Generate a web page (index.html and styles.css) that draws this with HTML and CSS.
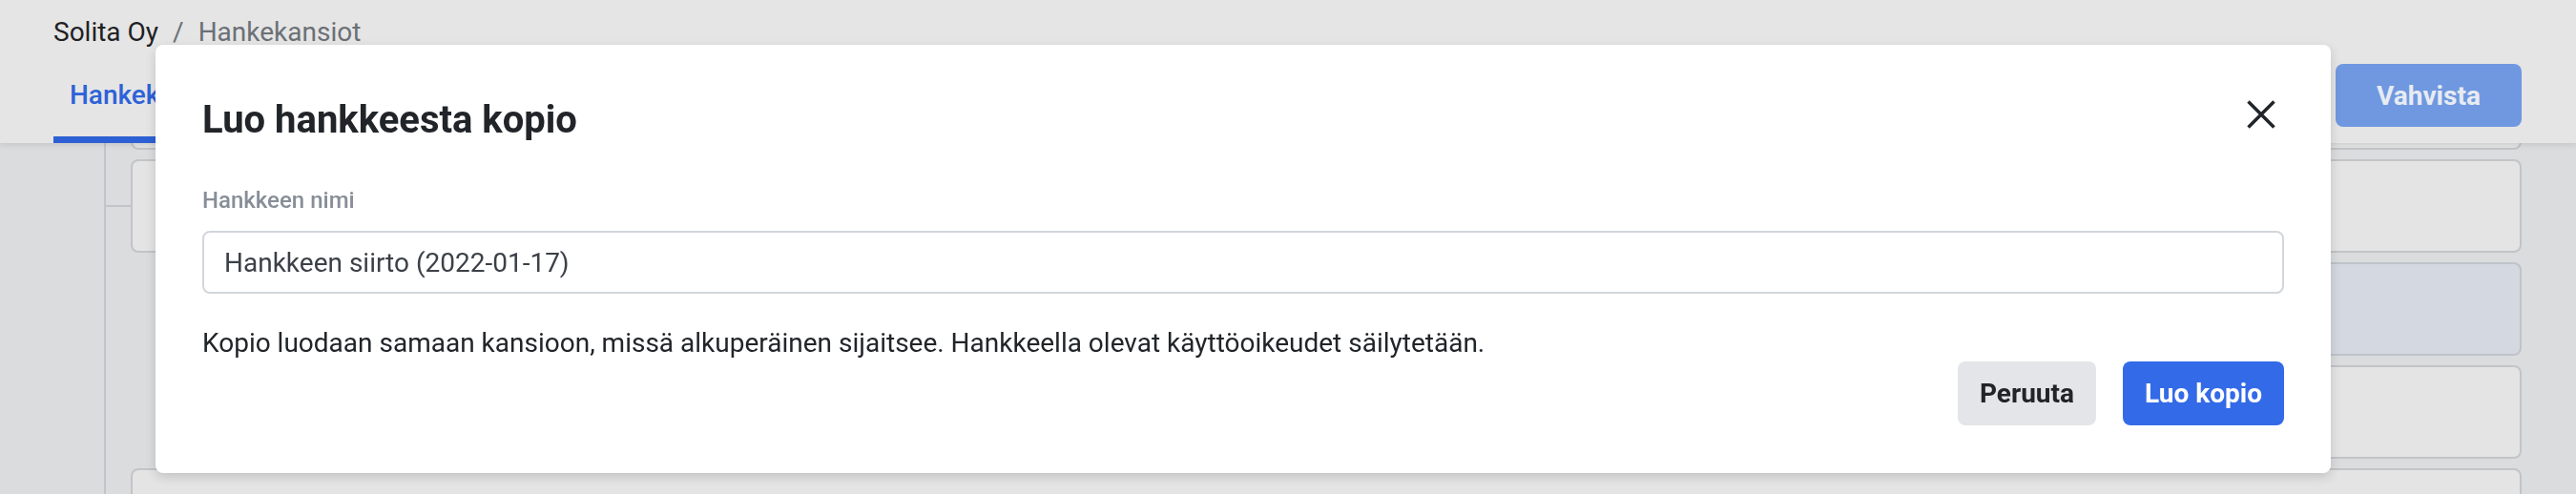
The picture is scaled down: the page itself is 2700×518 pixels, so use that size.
FILE: index.html
```html
<!DOCTYPE html>
<html lang="fi">
<head>
  <meta charset="UTF-8" />
  <meta name="viewport" content="width=device-width, initial-scale=1.0" />
  <title>Hankekansiot</title>
  <link rel="stylesheet" href="styles.css">
</head>
<body>
  <header class="topbar">
    <div class="topbar-left">
      <nav class="breadcrumb">
        <span class="crumb">Solita Oy</span>
        <span class="crumb-sep">/</span>
        <span class="crumb current">Hankekansiot</span>
      </nav>
      <div class="tabs">
        <div class="tab active">Hankekansiot</div>
      </div>
    </div>
    <div class="topbar-actions">
      <button class="confirm-button" disabled>Vahvista</button>
    </div>
  </header>

  <main class="content">
    <div class="folder-list">
      <div class="folder-card"></div>
      <div class="folder-card"></div>
      <div class="folder-card nested selected"></div>
      <div class="folder-card nested"></div>
      <div class="folder-card"></div>
    </div>
  </main>

  <div class="overlay">
    <div class="modal">
      <div class="modal-header">
        <h2 class="modal-title">Luo hankkeesta kopio</h2>
        <button class="close-button" aria-label="Sulje">
          <svg width="48" height="48" viewBox="0 0 24 24" fill="none" stroke="#212529" stroke-width="1.75">
            <path d="M5.25 5.25L18.75 18.75M18.75 5.25L5.25 18.75" />
          </svg>
        </button>
      </div>

      <label class="field-label" for="projectName">Hankkeen nimi</label>
      <input id="projectName" class="text-input" type="text" value="Hankkeen siirto (2022-01-17)" />

      <p class="modal-text">Kopio luodaan samaan kansioon, missä alkuperäinen sijaitsee. Hankkeella olevat käyttöoikeudet säilytetään.</p>

      <div class="modal-buttons">
        <button class="btn btn-secondary">Peruuta</button>
        <button class="btn btn-primary">Luo kopio</button>
      </div>
    </div>
  </div>
</body>
</html>
```

FILE: styles.css
```css
body {
  margin: 0;
  background: #dbdcde;
  font-family: Roboto, 'Liberation Sans', sans-serif;
  color: #212529;
  height: 518px;
  overflow: hidden;
}

/* barra superior */
.topbar {
  position: relative;
  z-index: 1;
  height: 150px;
  box-sizing: border-box;
  background: #e5e5e5;
  box-shadow: 0 2px 6px rgba(0, 0, 0, 0.1);
  display: flex;
  justify-content: space-between;
  padding: 0 57px 0 56px;
}

.breadcrumb {
  padding-top: 14px;
  font-size: 28px;
  line-height: 40px;
  display: flex;
}

.crumb {
  color: #1f2124;
}

.crumb.current {
  color: #6b7076;
}

.crumb-sep {
  color: #6b7076;
  margin: 0 15px;
}

.tabs {
  display: flex;
}

.tab {
  font-size: 28px;
  line-height: 40px;
  font-weight: 500;
  padding: 26px 17px 23px 17px;
  border-bottom: 7px solid transparent;
}

.tab.active {
  color: #2d62d7;
  border-bottom-color: #2d60d4;
}

.topbar-actions {
  padding-top: 67px;
}

.confirm-button {
  width: 195px;
  height: 66px;
  border: none;
  border-radius: 8px;
  background: #6f98e0;
  color: #e7ebf2;
  font-family: inherit;
  font-size: 28px;
  font-weight: 700;
}

/* lista de carpetas */
.content {
  margin-top: -91px;
  padding: 0 57px 0 109px;
  height: 459px;
  overflow: hidden;
}

.folder-list {
  border-left: 2px solid #c3c4c7;
  padding-left: 26px;
  display: flex;
  flex-direction: column;
  gap: 10px;
  height: 100%;
}

.folder-card {
  position: relative;
  flex-shrink: 0;
  height: 98px;
  box-sizing: border-box;
  border: 2px solid #c3c4c7;
  border-radius: 8px;
  background: #e4e4e4;
}

.folder-card::before {
  content: '';
  position: absolute;
  left: -28px;
  top: 46px;
  width: 26px;
  height: 2px;
  background: #c3c4c7;
}

.folder-card.nested {
  margin-left: 80px;
}

.folder-card.selected {
  background: #d3d8e1;
  border-color: #bfc3ca;
}

/* modal */
.overlay {
  position: fixed;
  inset: 0;
  z-index: 2;
  padding: 47px 0 0 163px;
}

.modal {
  width: 2280px;
  box-sizing: border-box;
  padding: 55px 49px 50px 49px;
  background: #fff;
  border-radius: 8px;
  box-shadow: 0 4px 12px rgba(0, 0, 0, 0.15);
  display: flex;
  flex-direction: column;
}

.modal-header {
  display: flex;
  justify-content: space-between;
  align-items: flex-start;
}

.modal-title {
  margin: 0;
  font-size: 40px;
  line-height: 48px;
  font-weight: 700;
  color: #212529;
}

.close-button {
  width: 48px;
  height: 48px;
  margin-top: -6px;
  padding: 0;
  border: none;
  background: none;
  display: flex;
}

.field-label {
  margin-top: 46px;
  font-size: 24px;
  line-height: 28px;
  font-weight: 500;
  color: #878e98;
}

.text-input {
  margin-top: 18px;
  height: 66px;
  box-sizing: border-box;
  border: 2px solid #d2d6db;
  border-radius: 8px;
  padding: 0 21px;
  font-family: inherit;
  font-size: 28px;
  color: #3c4148;
  outline: none;
}

.modal-text {
  margin: 34px 0 0 0;
  font-size: 28px;
  line-height: 36px;
  color: #212529;
}

.modal-buttons {
  margin-top: 1px;
  display: flex;
  justify-content: flex-end;
  gap: 28px;
}

.btn {
  height: 67px;
  padding: 0 23px;
  border: none;
  border-radius: 8px;
  font-family: inherit;
  font-size: 28px;
  font-weight: 700;
  cursor: pointer;
}

.btn-secondary {
  background: #e4e5e8;
  color: #212529;
}

.btn-primary {
  background: #336ae8;
  color: #fff;
}
```
